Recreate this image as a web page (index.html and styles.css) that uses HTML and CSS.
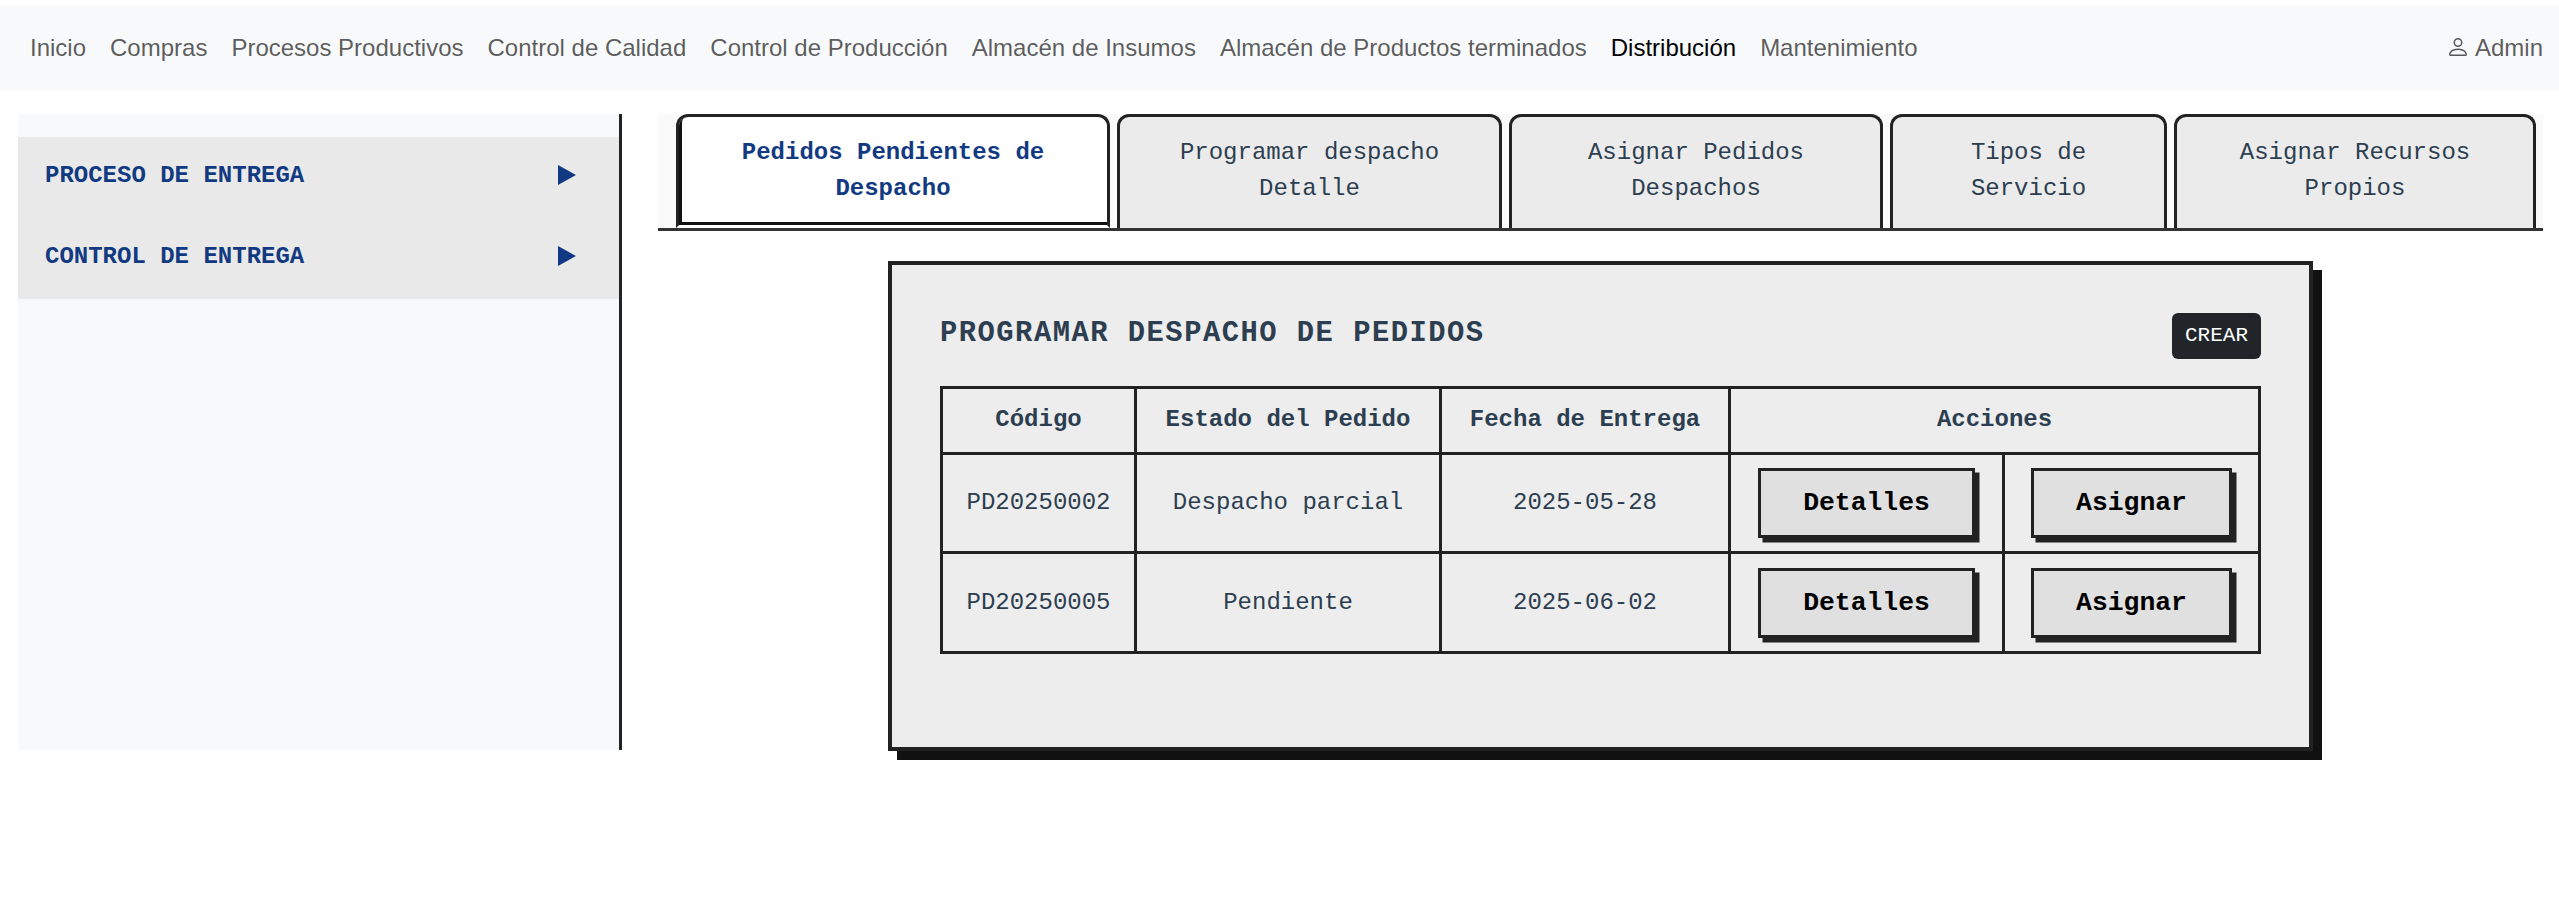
FILE: index.html
```html
<!DOCTYPE html>
<html lang="es">
<head>
<meta charset="utf-8">
<title>Distribución</title>
<link rel="stylesheet" href="styles.css">
</head>
<body>
<nav class="navbar">
  <div class="nav-links">
    <a class="nav-link">Inicio</a>
    <a class="nav-link">Compras</a>
    <a class="nav-link">Procesos Productivos</a>
    <a class="nav-link">Control de Calidad</a>
    <a class="nav-link">Control de Producción</a>
    <a class="nav-link">Almacén de Insumos</a>
    <a class="nav-link">Almacén de Productos terminados</a>
    <a class="nav-link active">Distribución</a>
    <a class="nav-link">Mantenimiento</a>
  </div>
  <a class="nav-user">
    <svg class="user-icon" viewBox="0 0 16 16" fill="currentColor"><path d="M8 8a3 3 0 1 0 0-6 3 3 0 0 0 0 6m2-3a2 2 0 1 1-4 0 2 2 0 0 1 4 0m4 8c0 1-1 1-1 1H3s-1 0-1-1 1-4 6-4 6 3 6 4m-1-.004c-.001-.246-.154-.986-.832-1.664C11.516 10.68 10.289 10 8 10s-3.516.68-4.168 1.332c-.678.678-.83 1.418-.832 1.664z"/></svg>
    <span>Admin</span>
  </a>
</nav>
<div class="layout">
  <aside class="sidebar">
    <div class="side-item"><span>PROCESO DE ENTREGA</span><svg class="arrow" viewBox="0 0 18 20"><path d="M0 0L18 10L0 20z"/></svg></div>
    <div class="side-item"><span>CONTROL DE ENTREGA</span><svg class="arrow" viewBox="0 0 18 20"><path d="M0 0L18 10L0 20z"/></svg></div>
  </aside>
  <main class="content">
    <div class="tabs">
      <div class="tab tab-pending selected">Pedidos Pendientes de Despacho</div>
      <div class="tab tab-detail">Programar despacho Detalle</div>
      <div class="tab tab-orders">Asignar Pedidos Despachos</div>
      <div class="tab tab-service">Tipos de Servicio</div>
      <div class="tab tab-resources">Asignar Recursos Propios</div>
    </div>
    <section class="card">
      <header class="card-header">
        <h1 class="card-title">PROGRAMAR DESPACHO DE PEDIDOS</h1>
        <button class="create">CREAR</button>
      </header>
      <table class="orders">
        <colgroup><col class="col-code"><col class="col-state"><col class="col-date"><col class="col-details"><col class="col-assign"></colgroup>
        <thead>
          <tr><th>Código</th><th>Estado del Pedido</th><th>Fecha de Entrega</th><th colspan="2">Acciones</th></tr>
        </thead>
        <tbody>
          <tr class="row-first"><td>PD20250002</td><td>Despacho parcial</td><td>2025-05-28</td><td><button class="action">Detalles</button></td><td><button class="action">Asignar</button></td></tr>
          <tr class="row-last"><td>PD20250005</td><td>Pendiente</td><td>2025-06-02</td><td><button class="action">Detalles</button></td><td><button class="action">Asignar</button></td></tr>
        </tbody>
      </table>
    </section>
  </main>
</div>
</body>
</html>
```
FILE: styles.css
```css
* { box-sizing: border-box; }
body {
  margin: 0;
  min-height: 918px;
  padding-top: 6px;
  background: #fff;
  color: #2c3e50;
  font: 24px/36px "Courier New", "Liberation Mono", monospace;
}
.navbar {
  display: flex;
  justify-content: space-between;
  align-items: center;
  height: 84px;
  padding: 0 16px 0 30px;
  background: #f8f9fb;
  font-family: Arial, "Liberation Sans", sans-serif;
  color: rgba(0, 0, 0, .65);
}
.nav-links { display: flex; gap: 24px; }
.nav-link { white-space: nowrap; }
.nav-link.active { color: #000; }
.nav-user { display: flex; align-items: center; gap: 5px; }
.user-icon { width: 24px; height: 24px; margin-top: -2px; }
.layout {
  display: flex;
  align-items: flex-start;
  gap: 36px;
  padding: 24px 16px 0 18px;
}
.sidebar {
  width: 604px;
  height: 636px;
  flex: none;
  padding-top: 23px;
  background: #f8f9fb;
  border-right: 3px solid #222;
}
.side-item {
  display: flex;
  justify-content: space-between;
  height: 81px;
  padding: 21px 43px 0 27px;
  background: #e9e9e9;
  color: #123a82;
  font-weight: bold;
}
.arrow { width: 18px; height: 20px; margin-top: 7px; fill: #123a82; }
.content { width: 1885px; }
.tabs {
  display: flex;
  gap: 7px;
  height: 117px;
  padding-left: 18px;
  background: #fafafa;
  border-bottom: 3px solid #333;
}
.tab {
  flex: none;
  padding: 18px 36px;
  border: 3px solid #222;
  border-bottom: 0;
  border-radius: 12px 12px 0 0;
  background: #ebebeb;
  text-align: center;
}
.tab.selected {
  border-bottom: 3px solid #fff;
  background: #fff;
  box-shadow: inset 3px -3px 0 #111;
  color: #123a82;
  font-weight: bold;
}
.tab-pending { width: 434px; }
.tab-detail { width: 385px; }
.tab-orders { width: 374px; }
.tab-service { width: 277px; }
.tab-resources { width: 362px; }
.card {
  width: 1425px;
  height: 490px;
  margin: 30px auto 0;
  padding: 48px;
  background: #ededed;
  border: 4px solid #222;
  box-shadow: 9px 9px 0 #111;
}
.card-header { display: flex; justify-content: space-between; height: 73px; }
.card-title {
  margin: 0;
  padding-top: 3px;
  font-size: 28.8px;
  line-height: 36px;
  letter-spacing: 1.5px;
}
.create {
  width: 89px;
  height: 46px;
  padding: 0;
  border: 0;
  border-radius: 6px;
  background: #212529;
  color: #fff;
  font: 21px/32px "Courier New", "Liberation Mono", monospace;
}
.orders {
  width: 1321px;
  table-layout: fixed;
  border-collapse: separate;
  border-spacing: 0;
  border: 3px solid #222;
  border-width: 3px 0 0 3px;
  text-align: center;
}
.orders th, .orders td {
  padding: 0;
  border: 3px solid #222;
  border-width: 0 3px 3px 0;
  vertical-align: middle;
}
.orders th { padding-bottom: 2px; }
.orders thead tr { height: 66px; }
.row-first { height: 99px; }
.row-last { height: 100px; }
.col-code { width: 194px; }
.col-state { width: 305px; }
.col-date { width: 289px; }
.col-details { width: 274px; }
.col-assign { width: 256px; }
.action {
  display: block;
  margin: 0 auto;
  height: 70px;
  padding: 0 42px;
  border: 3px solid #222;
  background: #e0e0e0;
  box-shadow: 4.5px 4.5px 0 #222;
  color: #000;
  font: bold 26.4px/40px "Courier New", "Liberation Mono", monospace;
}
```
